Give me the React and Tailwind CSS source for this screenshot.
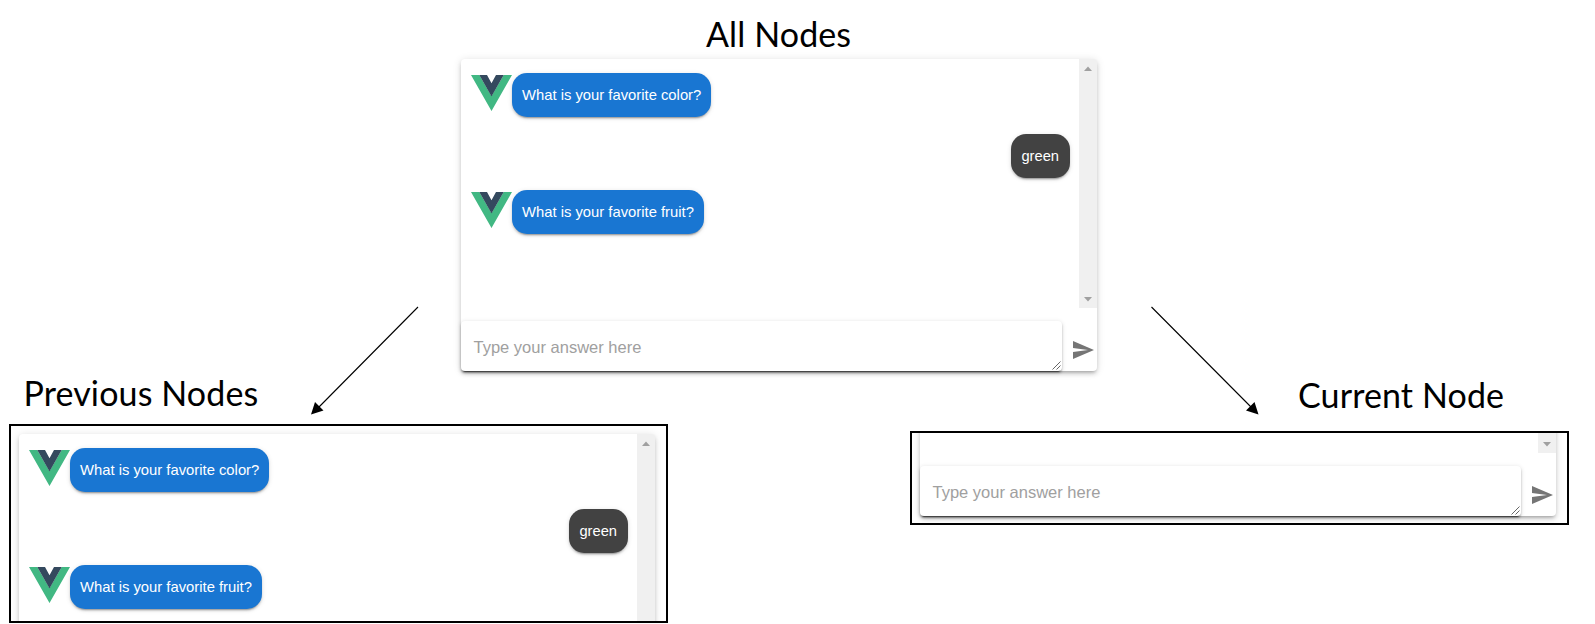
import React from "react";

function VueLogo() {
  return (
    <svg className="mt-[2px] h-[36px] w-[41px] shrink-0" viewBox="0 0 41 36" aria-hidden="true">
      <path d="M0 0H8.3L20.5 21.3L32.7 0H41L20.5 36Z" fill="#41b883" />
      <path d="M8.3 0H16L20.5 8.2L25 0H32.7L20.5 21.5Z" fill="#34495e" />
    </svg>
  );
}

const bubbleShadow =
  "shadow-[0_3px_1px_-2px_rgba(0,0,0,0.2),0_2px_2px_0_rgba(0,0,0,0.14),0_1px_5px_0_rgba(0,0,0,0.12)]";

function Question({ children }) {
  return (
    <div className="flex h-[44px] items-start pl-[10px]">
      <VueLogo />
      <div
        className={`flex h-[43.5px] items-center whitespace-nowrap rounded-[15px] bg-[#1976d2] px-[10px] text-[14.8px] text-white ${bubbleShadow}`}
      >
        {children}
      </div>
    </div>
  );
}

function Answer({ children }) {
  return (
    <div className="flex h-[44px] justify-end pr-[9.5px]">
      <div
        className={`flex h-[43.5px] items-center rounded-[15px] bg-[#424242] px-[10.5px] text-[14.7px] text-white ${bubbleShadow}`}
      >
        {children}
      </div>
    </div>
  );
}

function ScrollTrack({ up, down }) {
  return (
    <div className="flex w-[17.5px] shrink-0 flex-col items-center rounded-tr-[3px] bg-[#f0f0f0]">
      {up && (
        <svg className="mt-[7px] h-[5px] w-[8px]" viewBox="0 0 8 5" aria-hidden="true">
          <path d="M0 5L4 0.5L8 5Z" fill="#a0a0a0" />
        </svg>
      )}
      {down && (
        <svg className="mb-[6px] mt-auto h-[5px] w-[8px]" viewBox="0 0 8 5" aria-hidden="true">
          <path d="M0 0L4 4.5L8 0Z" fill="#a0a0a0" />
        </svg>
      )}
    </div>
  );
}

function AnswerInput() {
  return (
    <div className="flex grow items-end">
      <div className="flex h-[50px] w-[601px] items-end justify-between rounded-[4px] bg-white pl-[12.5px] shadow-[0_3px_1px_-2px_rgba(0,0,0,0.5),0_2px_2px_0_rgba(0,0,0,0.25),0_1px_5px_0_rgba(0,0,0,0.14)]">
        <span className="pb-[12px] text-[16.5px] leading-[24px] text-[#a0a0a0]">Type your answer here</span>
        <svg className="mb-px mr-[1px] h-[9px] w-[9px]" viewBox="0 0 9 9" aria-hidden="true">
          <path d="M0.5 8.5L8.5 0.5M4.5 8.5L8.5 4.5" stroke="#666" strokeWidth="1" fill="none" />
        </svg>
      </div>
      <svg className="mb-[9px] ml-[9px] h-[24px] w-[24px]" viewBox="0 0 24 24" aria-hidden="true">
        <path d="M2 21L23 12L2 3V10L17 12L2 14V21Z" fill="#757575" />
      </svg>
    </div>
  );
}

function ChatPanel({ history = true, input = true }) {
  return (
    <div className="flex h-[312px] w-[635.5px] shrink-0 flex-col rounded-[4px] bg-white font-['Liberation_Sans',Arial,sans-serif] shadow-[0_3px_3px_-2px_rgba(0,0,0,0.2),0_3px_4px_0_rgba(0,0,0,0.14),0_1px_8px_0_rgba(0,0,0,0.12)]">
      <div className="flex h-[249px]">
        <div className="flex grow flex-col pt-[14px]">
          {history && (
            <>
              <Question>What is your favorite color?</Question>
              <div className="mt-[17px]">
                <Answer>green</Answer>
              </div>
              <div className="mt-[12px]">
                <Question>What is your favorite fruit?</Question>
              </div>
            </>
          )}
        </div>
        <ScrollTrack up={history} down={input} />
      </div>
      {input && <AnswerInput />}
    </div>
  );
}

function Title({ children }) {
  return (
    <h2 className="whitespace-nowrap font-['Lato','Open_Sans',sans-serif] text-[34px] leading-[44px] tracking-[0.12px] text-black">
      {children}
    </h2>
  );
}

export default function App() {
  return (
    <main className="relative h-[624px] w-[1595px] overflow-hidden bg-white">
      <section className="absolute left-[461px] top-[59px]">
        <ChatPanel />
      </section>
      <div className="absolute left-[706px] top-[12px]">
        <Title>All Nodes</Title>
      </div>

      <svg className="absolute left-0 top-0" width="1595" height="624" viewBox="0 0 1595 624" aria-hidden="true">
        <path d="M418 307L318 408M1151.5 307L1251 407" stroke="#000" strokeWidth="1.1" />
        <path d="M311 414.5L315 402L323.5 410.5Z M1258.5 414.5L1254.5 402L1246 410.5Z" />
      </svg>

      <div className="absolute left-[23.5px] top-[371px]">
        <Title>Previous Nodes</Title>
      </div>
      <section className="absolute left-[9px] top-[424px] h-[199px] w-[659px] overflow-hidden border-2 border-black pl-[8px] pt-[8px]">
        <ChatPanel input={false} />
      </section>

      <div className="absolute left-[1298px] top-[373px]">
        <Title>Current Node</Title>
      </div>
      <section className="absolute left-[910px] top-[431px] flex h-[94px] w-[659px] items-end overflow-hidden border-2 border-black pb-[7px] pl-[8px]">
        <ChatPanel history={false} />
      </section>
    </main>
  );
}
